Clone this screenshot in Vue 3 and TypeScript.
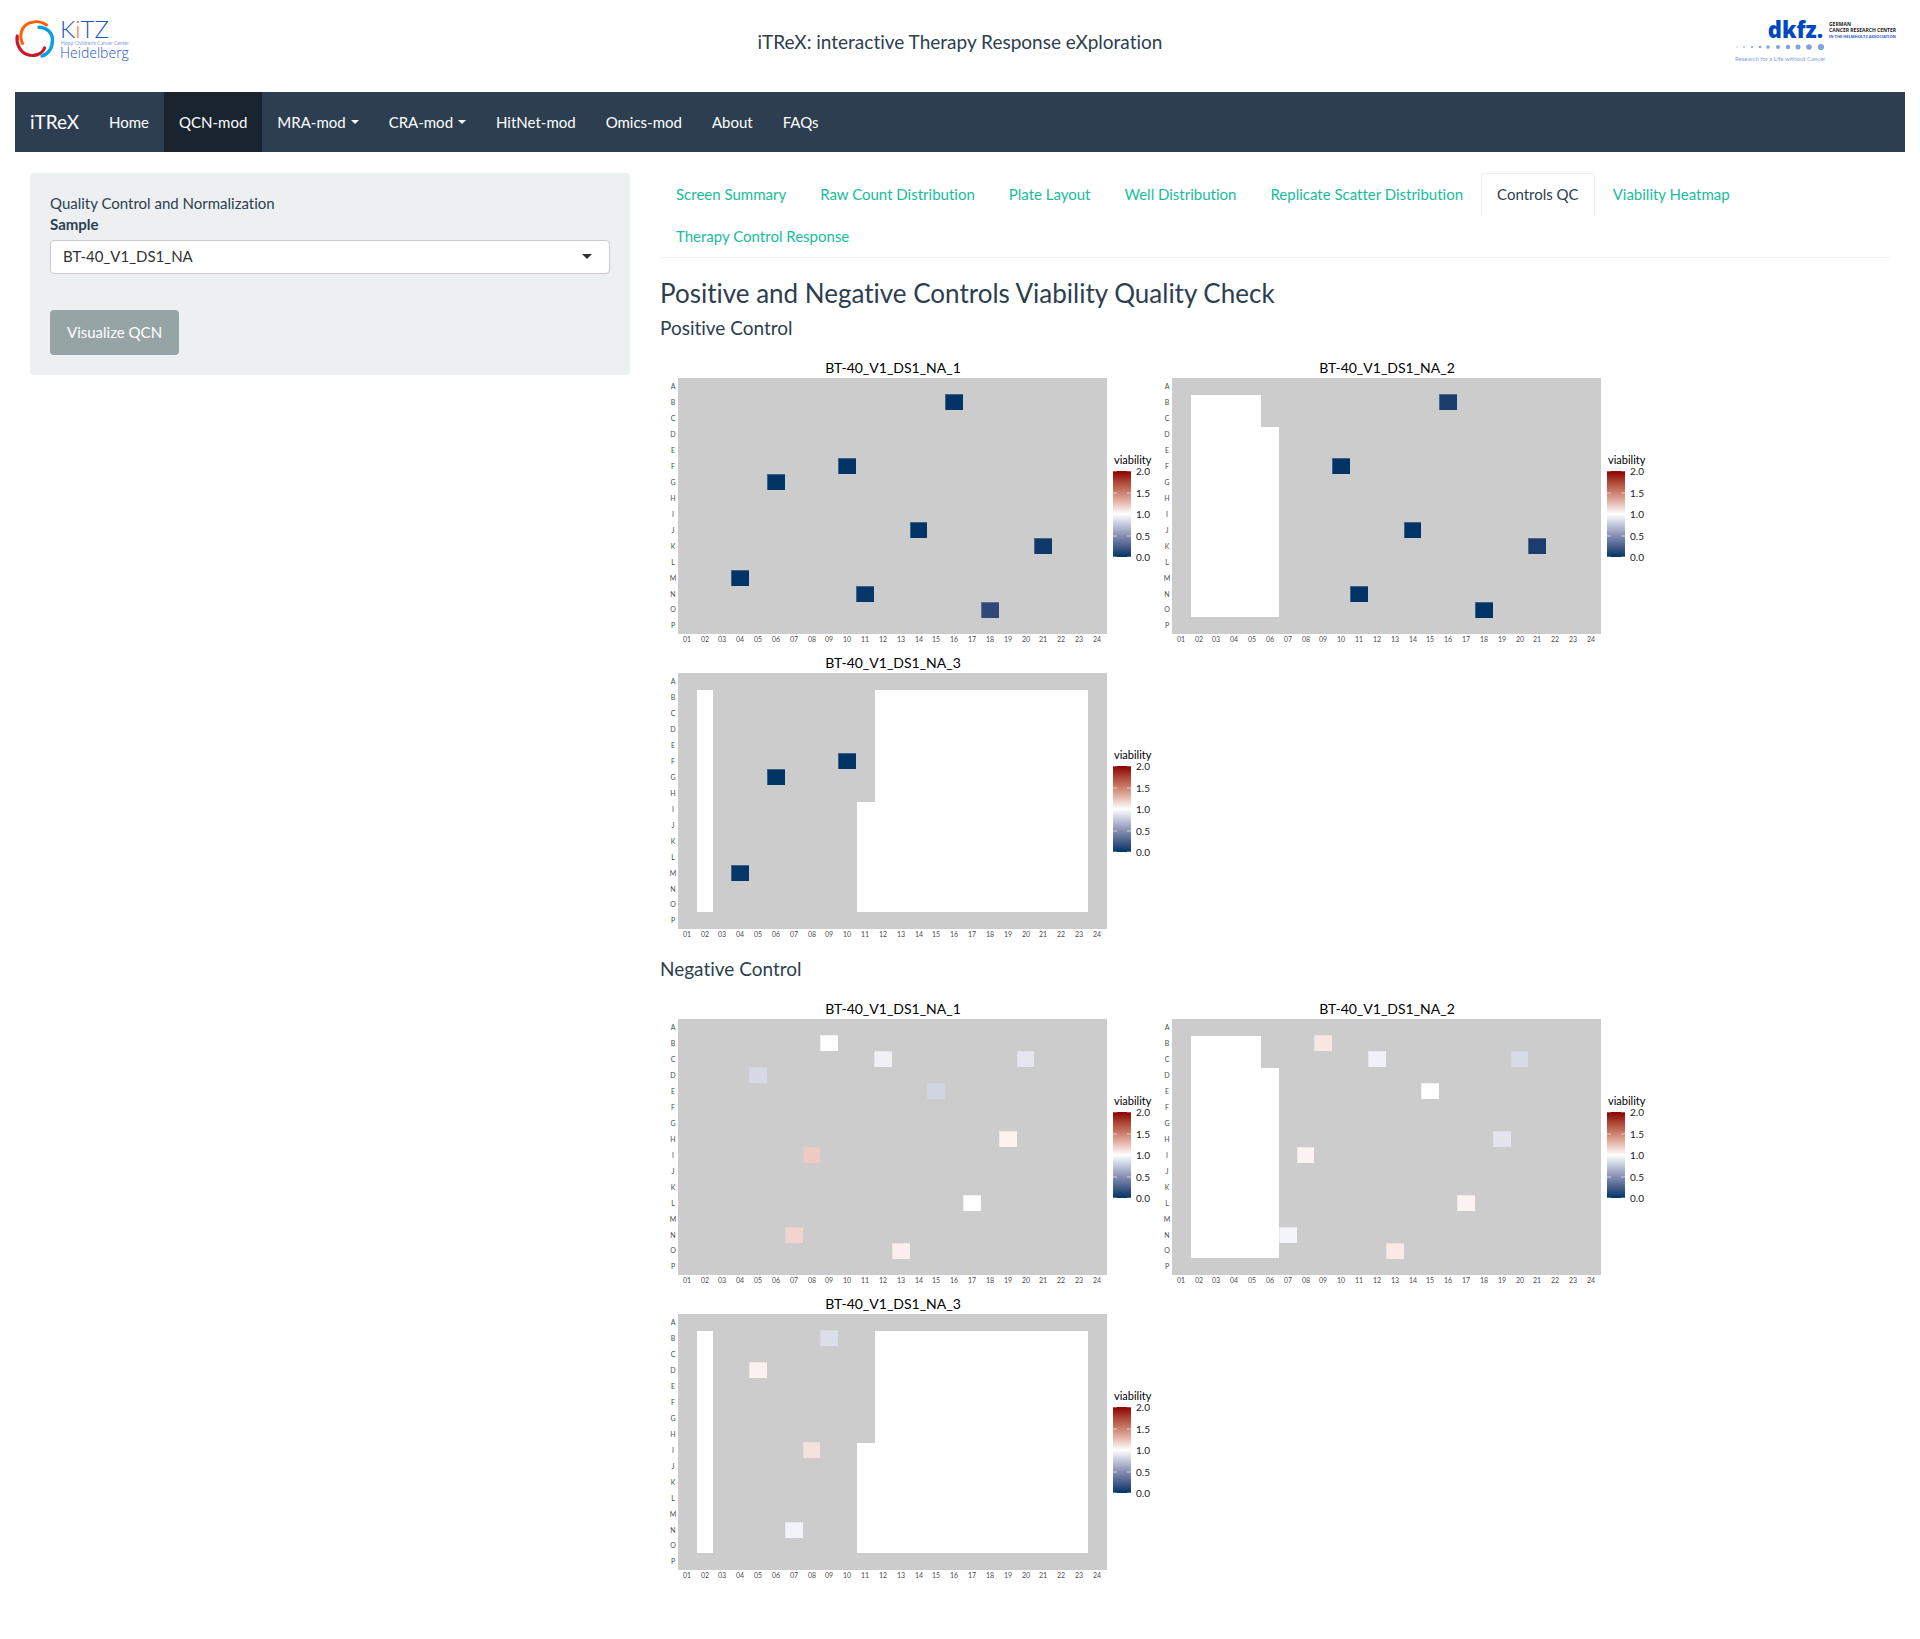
<script setup lang="ts">
import { ref } from 'vue'

interface NavItem {
  label: string
  active?: boolean
  menu?: boolean
}

interface Well {
  row: string
  col: number
  fill: string
}

interface Gap {
  fromRow: string
  toRow: string
  fromCol: number
  toCol: number
}

interface Plate {
  title: string
  wells: Well[]
  gaps: Gap[]
}

interface Section {
  heading: string
  plates: Plate[]
}

const navItems: NavItem[] = [
  { label: 'Home' },
  { label: 'QCN-mod', active: true },
  { label: 'MRA-mod', menu: true },
  { label: 'CRA-mod', menu: true },
  { label: 'HitNet-mod' },
  { label: 'Omics-mod' },
  { label: 'About' },
  { label: 'FAQs' },
]

const tabs = [
  'Screen Summary',
  'Raw Count Distribution',
  'Plate Layout',
  'Well Distribution',
  'Replicate Scatter Distribution',
  'Controls QC',
  'Viability Heatmap',
  'Therapy Control Response',
]
const activeTab = ref('Controls QC')

const samples = ['BT-40_V1_DS1_NA']
const sample = ref(samples[0])

const rows = 'ABCDEFGHIJKLMNOP'.split('')
const cols = Array.from({ length: 24 }, (_, i) => String(i + 1).padStart(2, '0'))

const panel = { x: 18, y: 29, width: 429, height: 256 }
const cellWidth = (panel.width - 1) / cols.length
const cellHeight = panel.height / rows.length

const colX = (col: number) => Math.floor(panel.x + (col - 1) * cellWidth + 0.2)
const rowY = (row: string) => panel.y + rows.indexOf(row) * cellHeight

const well = (row: string, col: number, fill: string): Well => ({ row, col, fill })
const gap = (fromRow: string, toRow: string, fromCol: number, toCol: number): Gap => ({
  fromRow,
  toRow,
  fromCol,
  toCol,
})

// The wells around an empty area overlap it by one pixel on each side.
const gapRect = (g: Gap) => {
  const x = colX(g.fromCol) + 1
  const y = rowY(g.fromRow) + 1
  return {
    x,
    y,
    width: colX(g.toCol + 1) - x,
    height: rowY(g.toRow) + cellHeight - 1 - y,
  }
}

const secondPlateGaps = [gap('B', 'O', 2, 5), gap('D', 'O', 5, 6)]
const thirdPlateGaps = [gap('B', 'O', 2, 2), gap('B', 'O', 12, 23), gap('I', 'O', 11, 12)]

const sections: Section[] = [
  {
    heading: 'Positive Control',
    plates: [
      {
        title: 'BT-40_V1_DS1_NA_1',
        gaps: [],
        wells: [
          well('B', 16, '#003366'),
          well('F', 10, '#003366'),
          well('G', 6, '#003366'),
          well('J', 14, '#003366'),
          well('K', 21, '#0d396b'),
          well('M', 4, '#003366'),
          well('N', 11, '#073669'),
          well('O', 18, '#304878'),
        ],
      },
      {
        title: 'BT-40_V1_DS1_NA_2',
        gaps: secondPlateGaps,
        wells: [
          well('B', 16, '#1a3d6e'),
          well('F', 10, '#003366'),
          well('J', 14, '#003366'),
          well('K', 21, '#1a3d6e'),
          well('N', 11, '#003366'),
          well('O', 18, '#003366'),
        ],
      },
      {
        title: 'BT-40_V1_DS1_NA_3',
        gaps: thirdPlateGaps,
        wells: [
          well('F', 10, '#003366'),
          well('G', 6, '#003366'),
          well('M', 4, '#073669'),
        ],
      },
    ],
  },
  {
    heading: 'Negative Control',
    plates: [
      {
        title: 'BT-40_V1_DS1_NA_1',
        gaps: [],
        wells: [
          well('B', 9, '#fefefe'),
          well('C', 12, '#f0f0f5'),
          well('C', 20, '#e6e6ef'),
          well('D', 5, '#d7dae6'),
          well('E', 15, '#d1d5e3'),
          well('H', 19, '#fdf2f0'),
          well('I', 8, '#edcac2'),
          well('L', 17, '#fefefe'),
          well('N', 7, '#f0d4cd'),
          well('O', 13, '#fceeec'),
        ],
      },
      {
        title: 'BT-40_V1_DS1_NA_2',
        gaps: secondPlateGaps,
        wells: [
          well('B', 9, '#f8e7e3'),
          well('C', 12, '#f0f1f6'),
          well('C', 20, '#d8dbe7'),
          well('E', 15, '#ffffff'),
          well('H', 19, '#e4e4ee'),
          well('I', 8, '#fdf2f0'),
          well('L', 17, '#fdf2f0'),
          well('N', 7, '#f4f5fa'),
          well('O', 13, '#fae9e5'),
        ],
      },
      {
        title: 'BT-40_V1_DS1_NA_3',
        gaps: thirdPlateGaps,
        wells: [
          well('B', 9, '#dcdfe9'),
          well('D', 5, '#fdf1ef'),
          well('I', 8, '#f6e2dd'),
          well('N', 7, '#f2f3f8'),
        ],
      },
    ],
  },
]

const legend = { x: 453, y: 122, width: 18, height: 86 }
const legendTicks = ['2.0', '1.5', '1.0', '0.5', '0.0']
const tickY = (i: number) => legend.y + Math.round((i * legend.height) / 4)

const sloganDots = [
  { x: 2, r: 0.6 },
  { x: 9, r: 0.8 },
  { x: 17, r: 1 },
  { x: 25, r: 1.3 },
  { x: 33, r: 1.7 },
  { x: 43, r: 2 },
  { x: 53, r: 2.2 },
  { x: 63, r: 2.5 },
  { x: 74, r: 2.8 },
  { x: 86, r: 3.1 },
]
</script>

<template>
  <div class="page">
    <header class="masthead">
      <svg class="kitz" viewBox="0 0 120 46" role="img" aria-label="KiTZ Heidelberg">
        <g fill="none" stroke-linecap="round">
          <path d="M7.500 25.500C3.500 17 7 8 14 5.200C20 2.800 27 3.500 31.500 7" stroke="#ff6000" stroke-width="3" />
          <path d="M24 9.200C32 9.500 37.500 15 37.500 22C37.500 30 33.500 36 27 38" stroke="#0aa0e0" stroke-width="3.400" />
          <path d="M2.200 18C1 26 5 34 12 36.500C19 39 27 36.500 29.500 30" stroke="#c8192d" stroke-width="3.200" />
        </g>
        <text x="45" y="20" class="kitz-name">K<tspan class="kitz-dot">i</tspan>TZ</text>
        <text x="46" y="27" class="kitz-sub">Hopp Children's Cancer Center</text>
        <text x="45" y="40" class="kitz-city">Heidelberg</text>
      </svg>
      <h4 class="app-title">iTReX: interactive Therapy Response eXploration</h4>
      <svg class="dkfz" viewBox="0 0 170 46" role="img" aria-label="dkfz German Cancer Research Center">
        <text x="88" y="20" text-anchor="end" class="dkfz-name">dkfz.</text>
        <text x="94" y="8" class="dkfz-line">GERMAN</text>
        <text x="94" y="14" class="dkfz-line">CANCER RESEARCH CENTER</text>
        <text x="94" y="20" class="dkfz-line dkfz-assoc">IN THE HELMHOLTZ ASSOCIATION</text>
        <circle v-for="dot in sloganDots" :key="dot.x" :cx="dot.x" cy="29" :r="dot.r" fill="#7ea2e0" />
        <text x="0" y="43" class="dkfz-slogan">Research for a Life without Cancer</text>
      </svg>
    </header>

    <nav class="navbar">
      <a href="#" class="brand">iTReX</a>
      <a
        v-for="item in navItems"
        :key="item.label"
        href="#"
        class="nav-link"
        :class="{ active: item.active }"
      >{{ item.label }}<span v-if="item.menu" class="caret"></span></a>
    </nav>

    <div class="columns">
      <aside class="sidebar">
        <form class="well" @submit.prevent>
          <div>Quality Control and Normalization</div>
          <label for="sample">Sample</label>
          <div class="select-wrap">
            <select id="sample" v-model="sample">
              <option v-for="name in samples" :key="name">{{ name }}</option>
            </select>
          </div>
          <button type="submit" class="visualize">Visualize QCN</button>
        </form>
      </aside>

      <main class="main">
        <div class="tabs">
          <a
            v-for="tab in tabs"
            :key="tab"
            href="#"
            class="tab"
            :class="{ active: tab === activeTab }"
            @click.prevent="activeTab = tab"
          >{{ tab }}</a>
        </div>

        <h3 class="title">Positive and Negative Controls Viability Quality Check</h3>

        <svg class="defs" width="0" height="0" aria-hidden="true">
          <defs>
            <linearGradient id="viability" x1="0" y1="0" x2="0" y2="1">
              <stop offset="0" stop-color="#8b0000" />
              <stop offset="0.125" stop-color="#ad4534" />
              <stop offset="0.25" stop-color="#cd7f6e" />
              <stop offset="0.375" stop-color="#e8beb4" />
              <stop offset="0.5" stop-color="#ffffff" />
              <stop offset="0.625" stop-color="#c3c7db" />
              <stop offset="0.75" stop-color="#8790b4" />
              <stop offset="0.875" stop-color="#4a5f8c" />
              <stop offset="1" stop-color="#003366" />
            </linearGradient>
          </defs>
        </svg>

        <section v-for="section in sections" :key="section.heading">
          <h4 class="subtitle">{{ section.heading }}</h4>
          <div class="plates">
            <svg
              v-for="plate in section.plates"
              :key="plate.title"
              class="plate"
              viewBox="0 0 494 295"
              role="img"
              :aria-label="plate.title"
            >
              <text class="plate-title" x="233" y="24" text-anchor="middle">{{ plate.title }}</text>
              <rect v-bind="panel" fill="#cccccc" />
              <rect v-for="(g, i) in plate.gaps" :key="i" v-bind="gapRect(g)" fill="#ffffff" />
              <g v-for="w in plate.wells" :key="w.row + w.col">
                <rect
                  :x="colX(w.col)"
                  :y="rowY(w.row)"
                  :width="colX(w.col + 1) - colX(w.col)"
                  :height="cellHeight"
                  :fill="w.fill"
                />
                <path
                  :d="`M${colX(w.col)} ${rowY(w.row) + cellHeight}v-16h${colX(w.col + 1) - colX(w.col)}v1h${colX(w.col) - colX(w.col + 1) + 1}v15z`"
                  fill="#cccccc"
                  fill-opacity="0.3"
                />
              </g>
              <text
                v-for="(row, i) in rows"
                :key="row"
                class="axis"
                x="13"
                :y="rowY(row) + (i < 14 ? 11 : 10)"
                text-anchor="middle"
              >{{ row }}</text>
              <text
                v-for="(col, i) in cols"
                :key="col"
                class="axis"
                :x="colX(i + 1) + 9"
                y="293"
                text-anchor="middle"
              >{{ col }}</text>
              <text class="legend-title" x="454" y="115">viability</text>
              <rect v-bind="legend" fill="url(#viability)" />
              <g v-for="(tick, i) in legendTicks" :key="tick">
                <path :d="`M453 ${tickY(i)}h4M467 ${tickY(i)}h4`" class="tick" />
                <text class="legend-label" x="476" :y="tickY(i) + 4">{{ tick }}</text>
              </g>
            </svg>
          </div>
        </section>
      </main>
    </div>
  </div>
</template>

<style>
body {
  margin: 0;
  background: #ffffff;
}
</style>

<style scoped>
.page {
  box-sizing: border-box;
  padding: 0 15px 64px;
  font-family: Lato, "Liberation Sans", sans-serif;
  font-size: 15px;
  font-variant-ligatures: none;
  line-height: 21px;
  color: #2c3e50;
}

a {
  text-decoration: none;
}

.masthead {
  display: grid;
  grid-template-columns: 1fr auto 1fr;
  align-items: start;
  height: 74px;
  padding-top: 18px;
}

.kitz {
  width: 120px;
  height: 46px;
  overflow: visible;
}

.dkfz {
  width: 170px;
  height: 46px;
  overflow: visible;
  justify-self: end;
}

.app-title {
  margin: 13px 0 0;
  font-size: 19px;
  font-weight: 400;
  line-height: 21px;
}

.kitz-name {
  font-size: 24px;
  font-weight: 300;
  fill: #1c57c0;
}

.kitz-dot {
  fill: #e8743a;
}

.kitz-sub {
  font-size: 5px;
  fill: #7fa0dc;
}

.kitz-city {
  font-family: "Open Sans", sans-serif;
  font-size: 14px;
  font-weight: 300;
  fill: #1c57c0;
}

.dkfz-name {
  font-family: "Open Sans", sans-serif;
  font-size: 22px;
  font-weight: 800;
  fill: #0048c0;
}

.dkfz-line {
  font-family: "Open Sans", sans-serif;
  font-size: 5px;
  font-weight: 700;
  fill: #1a1a1a;
}

.dkfz-assoc {
  font-size: 4px;
  fill: #1f62cc;
}

.dkfz-slogan {
  font-size: 6px;
  fill: #7ea2e0;
}

.navbar {
  display: flex;
  align-items: stretch;
  min-height: 60px;
  background: #2c3e50;
}

.brand,
.nav-link {
  display: flex;
  align-items: center;
  padding: 0 15px;
  color: #ffffff;
}

.brand {
  padding-bottom: 2px;
  font-size: 19px;
}

.nav-link.active {
  background: #1a242f;
}

.caret {
  margin-left: 5px;
  border-top: 4px solid;
  border-right: 4px solid transparent;
  border-left: 4px solid transparent;
}

.columns {
  display: flex;
  align-items: flex-start;
  margin-top: 21px;
}

.sidebar,
.main {
  box-sizing: border-box;
  padding: 0 15px;
}

.sidebar {
  flex: 0 0 33.3333%;
}

.main {
  flex: 1;
  min-width: 0;
}

.well {
  display: flex;
  flex-direction: column;
  padding: 20px;
  background: #ecf0f1;
  border-radius: 4px;
}

label {
  margin-bottom: 5px;
  font-weight: 700;
}

.select-wrap {
  position: relative;
  display: grid;
}

.select-wrap::after {
  content: "";
  position: absolute;
  top: 14px;
  right: 18px;
  border-top: 5px solid #333333;
  border-right: 5px solid transparent;
  border-left: 5px solid transparent;
  pointer-events: none;
}

select {
  height: 34px;
  padding: 0 12px 2px;
  appearance: none;
  font: inherit;
  color: #333333;
  background: #ffffff;
  border: 1px solid #cccccc;
  border-radius: 4px;
}

.visualize {
  align-self: flex-start;
  height: 45px;
  margin-top: 36px;
  padding: 0 17px;
  font: inherit;
  color: #ffffff;
  background: #95a5a6;
  border: 0;
  border-radius: 4px;
}

.tabs {
  display: flex;
  flex-wrap: wrap;
  border-bottom: 1px solid #ecf0f1;
}

.tab {
  margin: 0 2px -1px 0;
  padding: 10px 15px;
  border: 1px solid transparent;
  border-radius: 4px 4px 0 0;
  color: #18bc9c;
}

.tab.active {
  color: #2c3e50;
  background: #ffffff;
  border-color: #ecf0f1;
  border-bottom-color: transparent;
}

.title {
  margin: 21px 0 9px;
  font-size: 26px;
  font-weight: 400;
  line-height: 29px;
}

.defs {
  display: block;
}

.subtitle {
  margin: 0 0 11px;
  font-size: 19px;
  font-weight: 400;
  line-height: 21px;
}

section + section .subtitle {
  margin-top: 19px;
}

.plates {
  display: flex;
  flex-wrap: wrap;
  max-width: 1000px;
}

.plate {
  width: 494px;
  height: 295px;
  overflow: visible;
}

.plate-title {
  font-size: 14px;
  fill: #000000;
}

.axis {
  font-size: 7px;
  fill: #4d4d4d;
}

.legend-title {
  font-size: 11px;
  fill: #000000;
}

.legend-label {
  font-size: 10px;
  fill: #1a1a1a;
}

.tick {
  fill: none;
  stroke: #ffffff;
  stroke-opacity: 0.6;
}
</style>
